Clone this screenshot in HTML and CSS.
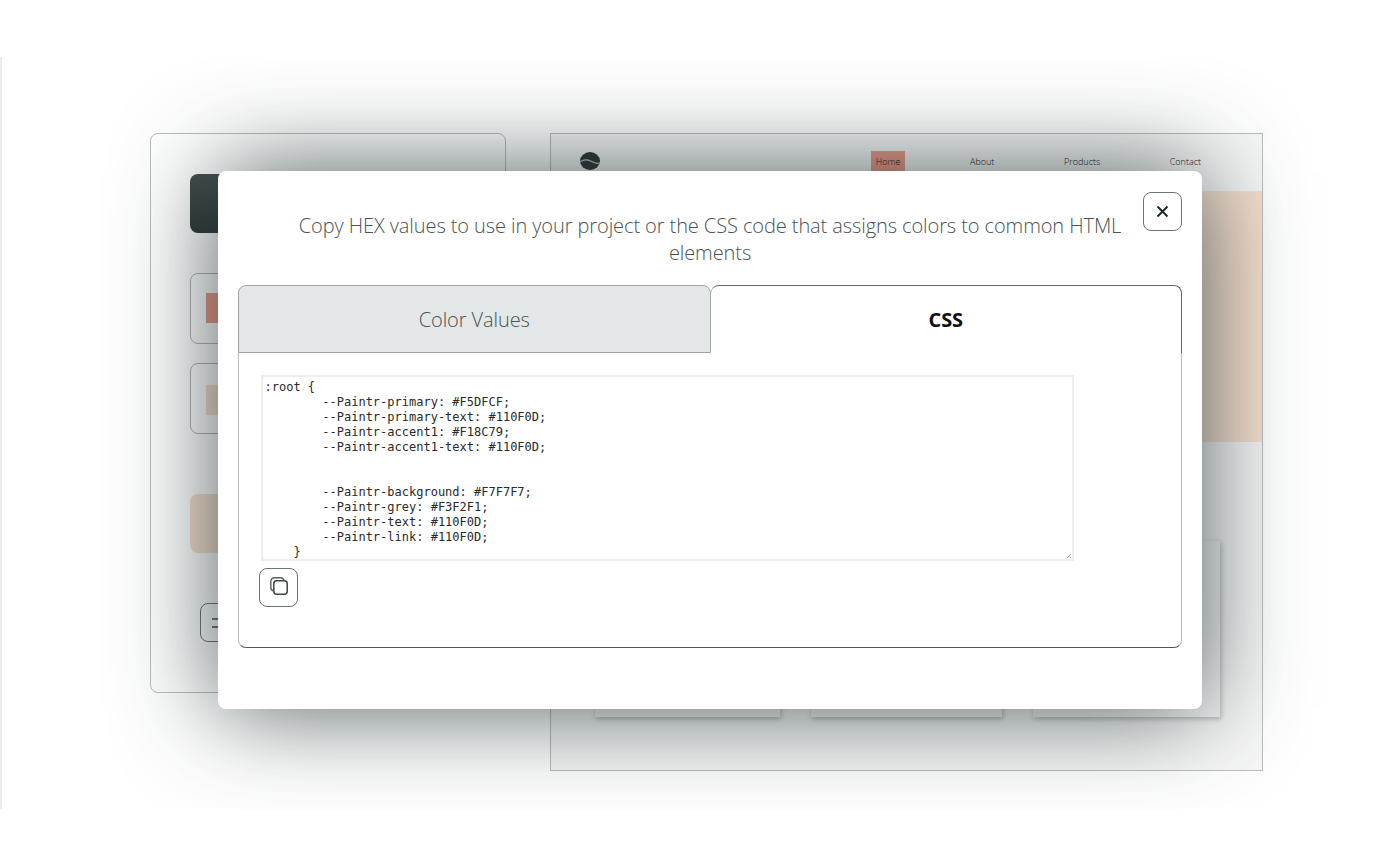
FILE: index.html
```html
<!DOCTYPE html>
<html lang="en">
<head>
<meta charset="utf-8">
<title>Paintr</title>
<link rel="stylesheet" href="styles.css">
</head>
<body>
<div class="stage">
  <div class="editor">
    <div class="dark-box"></div>
    <div class="color-card"><span class="swatch swatch-accent"></span></div>
    <div class="color-card second"><span class="swatch swatch-primary"></span></div>
    <div class="tone-box"></div>
    <button class="side-btn" type="button" aria-label="Next">
      <svg width="12" height="10" viewBox="0 0 12 10" aria-hidden="true">
        <path d="M0 1H7C10 1 11 3 11 5C11 7 10 9 7 9H0" fill="none" stroke="#3f4a4a" stroke-width="1.6"/>
      </svg>
    </button>
  </div>
  <div class="preview">
    <header class="site-header">
      <svg class="logo" width="20" height="18" viewBox="0 0 20 18" aria-hidden="true">
        <ellipse cx="10" cy="9" rx="10" ry="9" fill="#2b3636"/>
        <path d="M0 9C4 6.5 8 7 11 8.5C14 10 17 11 20 10.5V12C17 12.5 14 11.5 11 10C8 8.5 4 8 0 10.5Z" fill="#aeb3b3"/>
      </svg>
      <nav class="site-nav">
        <a class="nav-item active">Home</a>
        <a class="nav-item">About</a>
        <a class="nav-item">Products</a>
        <a class="nav-item">Contact</a>
      </nav>
    </header>
    <div class="hero"></div>
    <div class="cards">
      <div class="card c1"></div>
      <div class="card c2"></div>
      <div class="card c3"></div>
    </div>
  </div>
  <div class="modal">
    <button class="close-btn" type="button" aria-label="Close">
      <svg width="13" height="13" viewBox="0 0 13 13" aria-hidden="true"><path d="M1.5 1.5L11.5 11.5M11.5 1.5L1.5 11.5" stroke="#1f2a2a" stroke-width="2" fill="none"/></svg>
    </button>
    <p class="modal-title">Copy HEX values to use in your project or the CSS code that assigns colors to common HTML elements</p>
    <div class="tabs">
      <div class="tab">Color Values</div>
      <div class="tab active">CSS</div>
    </div>
    <div class="tab-panel">
      <textarea class="code" spellcheck="false">:root {
	--Paintr-primary: #F5DFCF;
	--Paintr-primary-text: #110F0D;
	--Paintr-accent1: #F18C79;
	--Paintr-accent1-text: #110F0D;


	--Paintr-background: #F7F7F7;
	--Paintr-grey: #F3F2F1;
	--Paintr-text: #110F0D;
	--Paintr-link: #110F0D;
    }</textarea>
      <button class="copy-btn" type="button" aria-label="Copy">
        <svg class="copy-icon" width="18" height="18" viewBox="0 0 18 18" aria-hidden="true">
          <path d="M3.4 14C1.8 13.5 .8 12.2 .8 10.5V4.5C.8 2.3 2.3 .8 4.5 .8H10.5C12.2 .8 13.5 1.8 14 3.4" fill="none" stroke="#59625f" stroke-width="1.4"/>
          <rect x="3.8" y="3.8" width="13.4" height="13.4" rx="3" fill="none" stroke="#3c4645" stroke-width="1.5"/>
        </svg>
      </button>
    </div>
  </div>
</div>
</body>
</html>
```
FILE: styles.css
```css
html, body {
  margin: 0;
  padding: 0;
  background: #fff;
}
body {
  height: 868px;
  overflow: hidden;
  padding-top: 57px;
  box-sizing: border-box;
  font-family: "Open Sans", sans-serif;
}
.stage {
  position: relative;
  display: flex;
  align-items: flex-start;
  gap: 44px;
  height: 752px;
  box-sizing: border-box;
  padding: 76px 0 0 148px;
  border-left: 2px solid #ececec;
  overflow: hidden;
}
.editor {
  width: 356px;
  height: 560px;
  box-sizing: border-box;
  padding: 40px 39px 0;
  border: 1px solid #b9bdbd;
  border-radius: 8px;
  display: flex;
  flex-direction: column;
  align-items: flex-start;
  background: #fff;
}
.dark-box {
  width: 100%;
  height: 59px;
  border-radius: 8px;
  background: linear-gradient(#454e4e, #2d3838);
}
.color-card {
  width: 100%;
  height: 71px;
  margin-top: 40px;
  box-sizing: border-box;
  border: 1px solid #b0b5b5;
  border-radius: 8px;
  padding: 19px 15px;
}
.color-card.second {
  margin-top: 19px;
  padding-top: 21px;
}
.swatch {
  display: block;
  width: 60px;
  height: 30px;
}
.swatch-accent { background: #ee9a89; }
.swatch-primary { background: #F5DFCF; }
.tone-box {
  width: 100%;
  height: 59px;
  margin-top: 60px;
  border-radius: 8px;
  background: #F5DFCF;
}
.side-btn {
  width: 80px;
  height: 39px;
  margin: 50px 0 0 10px;
  padding: 0 0 0 11px;
  display: flex;
  align-items: center;
  background: transparent;
  border: 1px solid #6b7574;
  border-radius: 8px;
}
.preview {
  width: 713px;
  height: 638px;
  box-sizing: border-box;
  border: 1px solid #b9bdbd;
  background: #f7f7f7;
}
.site-header {
  height: 57px;
  box-sizing: border-box;
  padding: 18px 56px 0 29px;
  display: flex;
  justify-content: space-between;
  align-items: flex-start;
}
.site-nav {
  display: flex;
  gap: 59.6px;
  margin-top: -1px;
}
.nav-item {
  font-size: 9px;
  font-weight: 300;
  line-height: 22px;
  padding: 0 5px;
  color: #110F0D;
}
.nav-item.active {
  background: #ee9a89;
}
.hero {
  height: 251px;
  background: #F5DFCF;
}
.cards {
  display: flex;
  gap: 31px;
  margin: 99px 42px 0 44px;
}
.card {
  height: 176px;
  background: #f7f7f7;
  box-shadow: 1px 2px 5px rgba(40, 50, 50, .3);
}
.c1 { flex: 185 1 0; }
.c2 { flex: 190 1 0; }
.c3 { flex: 187 1 0; }
.modal {
  position: absolute;
  left: 216px;
  top: 114px;
  width: 984px;
  height: 538px;
  box-sizing: border-box;
  padding: 41px 20px 0;
  background: #fff;
  border-radius: 8px;
  box-shadow: 0 0 100px rgba(30, 45, 45, .78);
}
.close-btn {
  position: absolute;
  top: 21px;
  right: 20px;
  width: 39px;
  height: 39px;
  padding: 0;
  display: flex;
  align-items: center;
  justify-content: center;
  background: #fff;
  border: 1px solid #6b7574;
  border-radius: 8px;
}
.modal-title {
  margin: 0;
  padding: 0 50px;
  text-align: center;
  font-size: 20px;
  font-weight: 300;
  line-height: 27px;
  letter-spacing: -0.09px;
  color: #4a5352;
}
.tabs {
  display: flex;
  margin-top: 19px;
}
.tab {
  flex: 1 1 0;
  height: 68px;
  box-sizing: border-box;
  display: flex;
  align-items: center;
  justify-content: center;
  font-size: 20px;
  font-weight: 300;
  letter-spacing: -0.09px;
  color: #4a5352;
  background: #e3e7e8;
  border: 1px solid #9fa5a4;
  border-radius: 8px 8px 0 0;
}
.tab.active {
  font-weight: 700;
  color: #110F0D;
  background: #fff;
  border: 1px solid #5f6967;
  border-left: 0;
  border-bottom: 0;
}
.tab-panel {
  height: 295px;
  box-sizing: border-box;
  padding: 23px 0 0 20px;
  border: 1px solid #b9bebd;
  border-top: 0;
  border-bottom-color: #4f5a58;
  border-radius: 0 0 8px 8px;
}
.code {
  display: block;
  width: 813px;
  height: 186px;
  margin: -1px 0 7px 2px;
  box-sizing: border-box;
  padding: 3px 1px 0 1.5px;
  border: 2px solid #eceeee;
  outline: none;
  overflow: hidden;
  resize: both;
  tab-size: 8;
  font-family: "DejaVu Sans Mono", monospace;
  font-size: 12px;
  line-height: 15px;
  color: #2a2a28;
}
.code::-webkit-resizer {
  background: linear-gradient(135deg, transparent 55%, #a8adac 55%, #a8adac 68%, transparent 68%, transparent 80%, #a8adac 80%) right 1px bottom 1px / 5px 5px no-repeat;
}
.copy-btn {
  width: 39px;
  height: 39px;
  padding: 0;
  display: flex;
  align-items: center;
  justify-content: center;
  background: #fff;
  border: 1px solid #6b7574;
  border-radius: 8px;
}
.copy-icon {
  margin-top: -3px;
}
```
